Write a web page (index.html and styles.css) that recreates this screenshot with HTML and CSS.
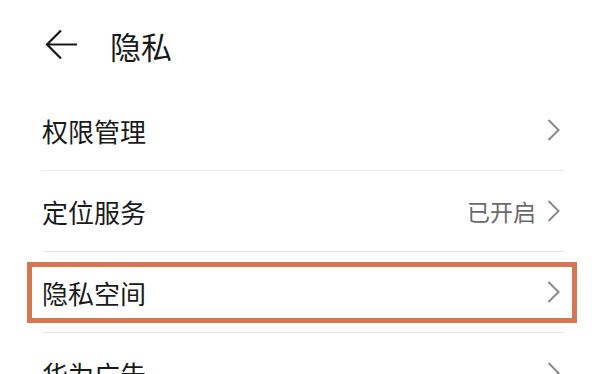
FILE: index.html
```html
<!DOCTYPE html>
<html lang="zh-CN">
<head>
    <meta charset="UTF-8">
    <meta name="viewport" content="width=device-width, initial-scale=1.0">
    <title>隐私</title>
    <link rel="stylesheet" href="styles.css">
</head>
<body>
    <div class="header">
        <svg class="back" width="34" height="32" viewBox="0 0 34 32">
            <path d="M33 15.5 H3 M17 1.5 L3 15.5 L17 29.5" fill="none" stroke="#1a1a1a" stroke-width="2.2"/>
        </svg>
        <h1>隐私</h1>
    </div>
    <div class="list">
        <div class="row">
            <span class="label">权限管理</span>
            <svg class="chevron" width="13" height="24" viewBox="0 0 13 24"><path d="M1.5 2 L11.5 12 L1.5 22" fill="none" stroke="#8a8a8a" stroke-width="2"/></svg>
        </div>
        <div class="row">
            <span class="label">定位服务</span>
            <span class="value">已开启</span>
            <svg class="chevron" width="13" height="24" viewBox="0 0 13 24"><path d="M1.5 2 L11.5 12 L1.5 22" fill="none" stroke="#8a8a8a" stroke-width="2"/></svg>
        </div>
        <div class="row marked">
            <span class="label">隐私空间</span>
            <svg class="chevron" width="13" height="24" viewBox="0 0 13 24"><path d="M1.5 2 L11.5 12 L1.5 22" fill="none" stroke="#8a8a8a" stroke-width="2"/></svg>
        </div>
        <div class="row">
            <span class="label">华为广告</span>
            <svg class="chevron" width="13" height="24" viewBox="0 0 13 24"><path d="M1.5 2 L11.5 12 L1.5 22" fill="none" stroke="#8a8a8a" stroke-width="2"/></svg>
        </div>
    </div>
</body>
</html>
```

FILE: styles.css
```css
body {
    margin: 0;
    background: #fff;
    font-family: "Noto Sans CJK SC", "Noto Sans", sans-serif;
    color: #1a1a1a;
    overflow: hidden;
}
.header {
    display: flex;
    align-items: center;
    height: 90px;
    padding-left: 44px;
}
.back {
    margin-right: 32px;
}
h1 {
    margin: 0;
    font-size: 31px;
    font-weight: 400;
}
.list {
    margin: 0 32px 0 42px;
}
.row {
    position: relative;
    display: flex;
    align-items: center;
    height: 80px;
    border-bottom: 1px solid #e8e8e8;
}
.label {
    flex: 1;
    font-size: 26px;
}
.value {
    font-size: 23px;
    color: #6b6b6b;
    margin-right: 11px;
}
.chevron {
    margin-right: 4px;
}
/* highlight frame drawn over the row */
.row.marked::after {
    content: "";
    position: absolute;
    left: -15px;
    right: -13px;
    top: 10px;
    bottom: 9px;
    border: 5px solid #d8764f;
}
```
